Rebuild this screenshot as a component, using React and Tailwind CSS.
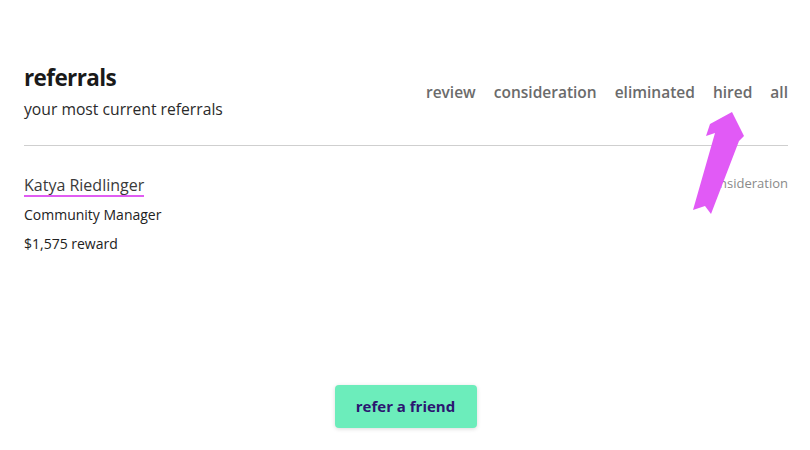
export default function App() {
  const tabs = ["review", "consideration", "eliminated", "hired", "all"];

  return (
    <div className="relative w-[810px] h-[450px] bg-white overflow-hidden font-['Open_Sans',sans-serif]">
      <div className="pl-6 pr-[22px] pt-[64px]">
        {/* header */}
        <div className="flex items-end justify-between pb-[26px] border-b border-[#cfcfcf]">
          <div>
            <h1 className="text-[22.5px] leading-[28px] font-bold tracking-[-0.6px] text-[#1a1a1a]">referrals</h1>
            <p className="mt-[7px] text-[15.7px] leading-[20px] text-[#2a2a2a]">your most current referrals</p>
          </div>
          <nav className="flex gap-[18px] mb-[17px] text-[15.5px] leading-[20px] font-semibold text-[#6b6b6b]">
            {tabs.map((t) => (
              <span key={t}>{t}</span>
            ))}
          </nav>
        </div>

        {/* referral row */}
        <div className="flex justify-between pt-[27px]">
          <div>
            <div className="inline-block text-[16px] leading-[20px] text-[#3a3a3a] border-b-2 border-[#e05cf2]">
              Katya Riedlinger
            </div>
            <div className="mt-[8px] text-[14px] leading-[20px] text-[#222]">Community Manager</div>
            <div className="mt-[9px] text-[14px] leading-[20px] text-[#222]">$1,575 reward</div>
          </div>
          <div className="text-[13px] leading-[20px] text-[#8a8a8a]">consideration</div>
        </div>
      </div>

      {/* call to action */}
      <div className="absolute left-0 right-0 top-[385px] flex justify-center">
        <button className="ml-[1px] w-[142px] h-[43px] rounded-[4px] bg-[#6cedbb] shadow-[0_1px_4px_rgba(0,0,0,0.15)] text-[15px] font-bold text-[#2b1670]">
          refer a friend
        </button>
      </div>

      {/* annotation arrow */}
      <svg className="absolute left-0 top-0" width="810" height="450" viewBox="0 0 810 450">
        <polygon
          points="732,112 744,136 739,141 711,214 705,206 693,210 715,133 706,136 710,124"
          fill="#e15af6"
        />
      </svg>
    </div>
  );
}
